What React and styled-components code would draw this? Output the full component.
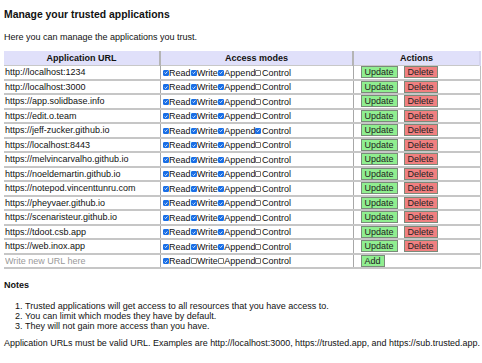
import React, { useState } from 'react'
import styled, { createGlobalStyle } from 'styled-components'

const GlobalStyle = createGlobalStyle`
  body {
    margin: 0;
    background: #fff;
    color: #111;
    font-family: "Liberation Sans", Arial, sans-serif;
    font-size: 9px;
  }
`

const apps = [
  { url: 'http://localhost:1234', modes: [true, true, true, false] },
  { url: 'http://localhost:3000', modes: [true, true, true, false] },
  { url: 'https://app.solidbase.info', modes: [true, true, true, false] },
  { url: 'https://edit.o.team', modes: [true, true, true, false] },
  { url: 'https://jeff-zucker.github.io', modes: [true, true, true, true] },
  { url: 'https://localhost:8443', modes: [true, true, true, false] },
  { url: 'https://melvincarvalho.github.io', modes: [true, true, true, false] },
  { url: 'https://noeldemartin.github.io', modes: [true, true, true, false] },
  { url: 'https://notepod.vincenttunru.com', modes: [true, true, true, false] },
  { url: 'https://pheyvaer.github.io', modes: [true, true, true, false] },
  { url: 'https://scenaristeur.github.io', modes: [true, true, true, false] },
  { url: 'https://tdoot.csb.app', modes: [true, true, true, false] },
  { url: 'https://web.inox.app', modes: [true, true, true, false] },
]

const modeNames = ['Read', 'Write', 'Append', 'Control']

const Page = styled.div`
  padding: 9px 2px 0 4px;
`

const Heading = styled.h2`
  margin: 0;
  font-size: 10.4px;
  line-height: 12px;
  font-weight: 700;
`

const Intro = styled.p`
  margin: 10.5px 0 8.5px;
  line-height: 11px;
`

const Table = styled.table`
  width: 476px;
  table-layout: fixed;
  border-collapse: collapse;
`

const Th = styled.th`
  height: 14px;
  padding: 0;
  background: #e0e0fa;
  font-weight: 700;
  font-size: 9px;
  text-align: center;
  border-right: 2px solid ${p => (p.$last ? '#d4d4ee' : '#b4b4b4')};
  border-bottom: 1px solid #c8c8c8;
`

const Td = styled.td`
  height: 12.5px;
  padding: 0 0 0 ${p => p.$pad || 1}px;
  border-bottom: 2px solid #c6c6c6;
  border-right: 1px solid ${p => (p.$last ? '#c0c0c0' : '#a8a8a8')};
  white-space: nowrap;
  overflow: hidden;
  vertical-align: middle;
`

const UrlInput = styled.input`
  width: 140px;
  border: none;
  padding: 0;
  margin: 0;
  background: transparent;
  font: inherit;
  color: #111;
  outline: none;

  &::placeholder {
    color: #9a9a9a;
  }
`

const Modes = styled.span`
  display: inline-flex;
  align-items: center;
  padding-left: 1px;
`

const ModeLabel = styled.label`
  display: inline-flex;
  align-items: center;
  cursor: pointer;
`

const HiddenCheck = styled.input`
  position: absolute;
  opacity: 0;
  width: 0;
  height: 0;
  margin: 0;
`

const Box = styled.span`
  display: inline-flex;
  align-items: center;
  justify-content: center;
  box-sizing: border-box;
  width: 6px;
  height: 6px;
  margin-right: 0.5px;
  border: 1px solid ${p => (p.$checked ? '#1a6fe6' : '#767676')};
  border-radius: 1px;
  background: ${p => (p.$checked ? '#1a6fe6' : '#fff')};
`

const Buttons = styled.span`
  display: inline-flex;
  gap: 6px;
  align-items: center;
`

const ActionButton = styled.button`
  height: 12px;
  padding: 0 3px;
  border: 1px solid #7a8a7a;
  border-radius: 0;
  background: ${p => (p.$danger ? '#f08080' : '#90ee90')};
  color: #222;
  font-family: inherit;
  font-size: 9px;
  line-height: 10px;
  cursor: pointer;
`

const NotesTitle = styled.h4`
  margin: 11px 0 0;
  font-size: 9px;
  line-height: 11px;
  font-weight: 700;
`

const NotesList = styled.ol`
  margin: 9.5px 0 0;
  padding-left: 21px;
  line-height: 10px;
`

const Footer = styled.p`
  margin: 7.5px 0 0;
  line-height: 11px;
  font-size: 8.95px;
  white-space: nowrap;
`

const ModeCheck = ({ name, initial }) => {
  const [checked, setChecked] = useState(initial)
  return (
    <ModeLabel>
      <HiddenCheck type="checkbox" checked={checked} onChange={e => setChecked(e.target.checked)} />
      <Box $checked={checked}>
        {checked && (
          <svg width="5" height="5" viewBox="0 0 10 10">
            <path d="M1.5 5.2 L4 7.7 L8.6 2.4" fill="none" stroke="#fff" strokeWidth="2" />
          </svg>
        )}
      </Box>
      {name}
    </ModeLabel>
  )
}

const ModeChecks = ({ values }) => (
  <Modes>
    {modeNames.map((name, i) => (
      <ModeCheck key={name} name={name} initial={values[i]} />
    ))}
  </Modes>
)

const App = () => {
  const [newUrl, setNewUrl] = useState('')

  return (
    <Page>
      <GlobalStyle />
      <Heading>Manage your trusted applications</Heading>
      <Intro>Here you can manage the applications you trust.</Intro>
      <Table>
        <colgroup>
          <col style={{ width: 156 }} />
          <col style={{ width: 193 }} />
          <col style={{ width: 127 }} />
        </colgroup>
        <thead>
          <tr>
            <Th>Application URL</Th>
            <Th>Access modes</Th>
            <Th $last>Actions</Th>
          </tr>
        </thead>
        <tbody>
          {apps.map(app => (
            <tr key={app.url}>
              <Td>{app.url}</Td>
              <Td>
                <ModeChecks values={app.modes} />
              </Td>
              <Td $pad={7} $last>
                <Buttons>
                  <ActionButton>Update</ActionButton>
                  <ActionButton $danger>Delete</ActionButton>
                </Buttons>
              </Td>
            </tr>
          ))}
          <tr>
            <Td>
              <UrlInput
                value={newUrl}
                onChange={e => setNewUrl(e.target.value)}
                placeholder="Write new URL here"
              />
            </Td>
            <Td>
              <ModeChecks values={[true, false, false, false]} />
            </Td>
            <Td $pad={7} $last>
              <Buttons>
                <ActionButton>Add</ActionButton>
              </Buttons>
            </Td>
          </tr>
        </tbody>
      </Table>
      <NotesTitle>Notes</NotesTitle>
      <NotesList>
        <li>Trusted applications will get access to all resources that you have access to.</li>
        <li>You can limit which modes they have by default.</li>
        <li>They will not gain more access than you have.</li>
      </NotesList>
      <Footer>
        Application URLs must be valid URL. Examples are http://localhost:3000, https://trusted.app, and https://sub.trusted.app.
      </Footer>
    </Page>
  )
}

export default App
